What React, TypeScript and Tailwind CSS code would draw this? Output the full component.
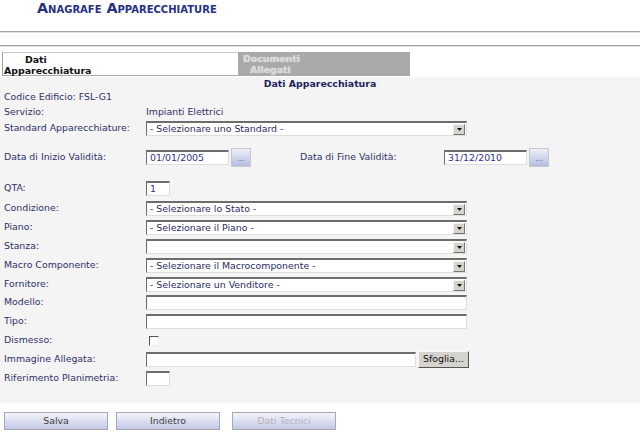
import React from 'react';

const font = { fontFamily: '"DejaVu Sans", Verdana, sans-serif' };

function Arrow() {
  return (
    <div className="absolute right-[1px] top-[1px] w-[12px] h-[11px] bg-[#d6d3cc] border border-t-[#f4f4f4] border-l-[#f4f4f4] border-b-[#777] border-r-[#777] flex items-center justify-center">
      <svg width="5" height="3" viewBox="0 0 5 3">
        <path d="M0 0 L5 0 L2.5 3 Z" fill="#111" />
      </svg>
    </div>
  );
}

function Select({ text = '' }: { text?: string }) {
  return (
    <div className="relative w-[321px] h-[15px] bg-white border-t-2 border-l border-b border-r border-t-[#6d6d6d] border-l-[#6d6d6d] border-b-[#dedede] border-r-[#dedede] pl-[3px] text-[9.4px] leading-[12px] text-[#2a2b63] whitespace-nowrap">
      {text}
      <Arrow />
    </div>
  );
}

function Input({ w, value = '' }: { w: string; value?: string }) {
  return (
    <div className={`${w} h-[15px] bg-white border-t-2 border-l border-b border-r border-t-[#6d6d6d] border-l-[#6d6d6d] border-b-[#dedede] border-r-[#dedede] pl-[3px] text-[9.4px] leading-[12px] text-[#30308a] whitespace-nowrap`}>
      {value}
    </div>
  );
}

function DotsButton() {
  return (
    <div className="w-[20px] h-[19px] ml-[2px] bg-gradient-to-b from-[#eef0f8] to-[#b5bde0] border border-[#c8c8c8] flex items-end justify-center pb-[3px] text-[8px] leading-[8px] text-[#6270ac]">
      ...
    </div>
  );
}

function Row({ label, h, children }: { label: string; h: string; children?: React.ReactNode }) {
  return (
    <div className={`flex items-center ${h}`}>
      <div className="w-[146px] pl-[4px] shrink-0 text-[9.4px] text-[#2e3068] whitespace-nowrap">{label}</div>
      {children}
    </div>
  );
}

function BottomButton({ label, disabled = false }: { label: string; disabled?: boolean }) {
  return (
    <div
      className={`w-[104px] h-[18px] flex items-center justify-center border border-[#a8a8b0] bg-gradient-to-b from-[#f4f5fa] to-[#c3c9e6] text-[9.4px] ${
        disabled ? 'text-[#b4b4bc]' : 'text-[#3c3c3c]'
      }`}
    >
      {label}
    </div>
  );
}

export default function App() {
  return (
    <div className="w-[642px] h-[432px] bg-white overflow-hidden" style={font}>
      {/* title */}
      <div className="h-[31px] pl-[37px]">
        <div className="text-[14.3px] leading-[17px] font-bold text-[#253086] [font-variant:small-caps]">
          Anagrafe Apparecchiature
        </div>
      </div>
      <div className="w-[640px] h-[2px] border-t border-b border-t-[#a3a3a3] border-b-[#e2e2e2]" />
      <div className="h-[12px]" />
      <div className="w-[640px] h-[2px] border-t border-b border-t-[#a3a3a3] border-b-[#e2e2e2]" />

      {/* tabs */}
      <div className="flex mt-[5px] h-[24px] pl-[2px]">
        <div className="w-[236px] bg-white border-t border-l border-b border-t-[#c8c8c8] border-l-[#9c9c9c] border-b-[#a8a8a8] pl-[1px] pt-[1px] text-[9.4px] font-bold leading-[11px] text-[#111]">
          <div className="pl-[21px]">Dati</div>
          <div>Apparecchiatura</div>
        </div>
        <div className="w-[172px] bg-[#a9a9a9] pl-[5px] pt-[1px] text-[9.4px] font-bold leading-[11px] text-[#d9d9d9] [text-shadow:0_0_1px_#eee]">
          <div>Documenti</div>
          <div className="pl-[7px]">Allegati</div>
        </div>
      </div>

      {/* panel */}
      <div className="mt-[1px] w-[640px] h-[326px] bg-[#f4f4f4]">
        <div className="h-[14px] flex items-center justify-center text-[9.4px] font-bold text-[#1d1f5e]">
          Dati Apparecchiatura
        </div>
        <Row label="Codice Edificio: FSL-G1" h="h-[13px]" />
        <Row label="Servizio:" h="h-[17px]">
          <span className="text-[9.4px] text-[#2e3068]">Impianti Elettrici</span>
        </Row>
        <Row label="Standard Apparecchiature:" h="h-[15px]">
          <Select text="- Selezionare uno Standard -" />
        </Row>
        <div className="h-[12px]" />
        <Row label="Data di Inizio Validità:" h="h-[19px]">
          <Input w="w-[83px]" value="01/01/2005" />
          <DotsButton />
          <div className="w-[49px]" />
          <div className="w-[144px] text-[9.4px] text-[#2e3068] whitespace-nowrap">Data di Fine Validità:</div>
          <Input w="w-[83px]" value="31/12/2010" />
          <DotsButton />
        </Row>
        <div className="h-[13px]" />
        <Row label="QTA:" h="h-[16px]">
          <Input w="w-[24px]" value="1" />
        </Row>
        <div className="h-[3px]" />
        <Row label="Condizione:" h="h-[19px]">
          <Select text="- Selezionare lo Stato -" />
        </Row>
        <Row label="Piano:" h="h-[19px]">
          <Select text="- Selezionare il Piano -" />
        </Row>
        <Row label="Stanza:" h="h-[19px]">
          <Select />
        </Row>
        <Row label="Macro Componente:" h="h-[19px]">
          <Select text="- Selezionare il Macrocomponente -" />
        </Row>
        <Row label="Fornitore:" h="h-[18px]">
          <Select text="- Selezionare un Venditore -" />
        </Row>
        <Row label="Modello:" h="h-[18px]">
          <Input w="w-[321px]" />
        </Row>
        <Row label="Tipo:" h="h-[20px]">
          <Input w="w-[321px]" />
        </Row>
        <Row label="Dismesso:" h="h-[19px]">
          <div className="ml-[3px] w-[10px] h-[10px] bg-white border-t border-l border-b border-r border-t-[#555] border-l-[#555] border-b-[#eee] border-r-[#eee]" />
        </Row>
        <Row label="Immagine Allegata:" h="h-[19px]">
          <Input w="w-[270px]" />
          <div className="ml-[2px] w-[51px] h-[17px] bg-[#d6d3cc] border border-t-[#fafafa] border-l-[#fafafa] border-b-[#555] border-r-[#555] flex items-center justify-center text-[9.4px] text-[#111]">
            Sfoglia...
          </div>
        </Row>
        <Row label="Riferimento Planimetria:" h="h-[18px]">
          <Input w="w-[24px]" />
        </Row>
      </div>

      {/* buttons */}
      <div className="flex mt-[9px] pl-[4px]">
        <BottomButton label="Salva" />
        <div className="w-[8px]" />
        <BottomButton label="Indietro" />
        <div className="w-[12px]" />
        <BottomButton label="Dati Tecnici" disabled />
      </div>
    </div>
  );
}
